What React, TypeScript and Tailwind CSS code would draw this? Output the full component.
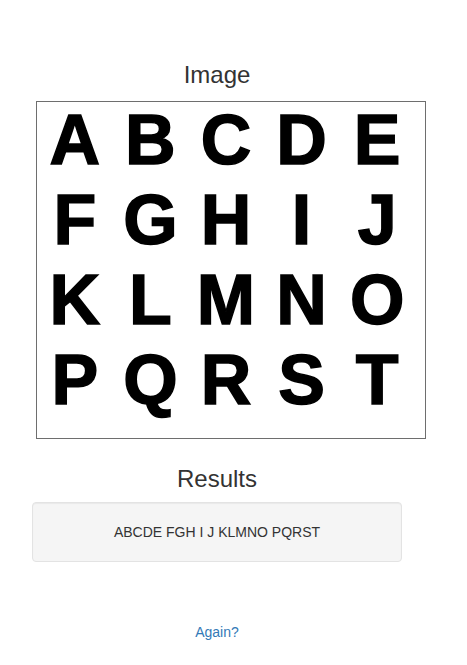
const rows = [
  ["A", "B", "C", "D", "E"],
  ["F", "G", "H", "I", "J"],
  ["K", "L", "M", "N", "O"],
  ["P", "Q", "R", "S", "T"],
];

export default function App() {
  return (
    <div className="min-h-[665px] w-[467px] bg-white font-['Liberation_Sans',Arial,sans-serif] text-[#333]">
      <div className="flex w-[434px] flex-col">
        {/* Image */}
        <h3 className="mt-[62px] text-center text-[24px] leading-[26.4px] font-normal">Image</h3>
        <div className="mt-[12.6px] px-[32px]">
          <div className="ml-[4px] h-[338px] w-[390px] border border-[#6e6e6e] bg-white pr-[10px]">
            <div className="-mt-[2px] grid grid-cols-5">
              {rows.flat().map((ch) => (
                <div
                  key={ch}
                  className="text-center text-[70px] leading-[80px] font-bold text-black [-webkit-text-stroke:1.5px_black]"
                >
                  {ch}
                </div>
              ))}
            </div>
          </div>
        </div>

        {/* Results */}
        <h3 className="mt-[27px] text-center text-[24px] leading-[26.4px] font-normal">Results</h3>
        <div className="mx-[32px] mt-[9.6px] rounded border border-[#e3e3e3] bg-[#f5f5f5] p-[19px] text-center text-[14px] leading-[20px] shadow-[inset_0_1px_1px_rgba(0,0,0,0.05)]">
          ABCDE FGH I J KLMNO PQRST
        </div>

        <div className="mt-[60px] text-center text-[14px] leading-[20px]">
          <a href="#" className="text-[#337ab7]">
            Again?
          </a>
        </div>
      </div>
    </div>
  );
}
